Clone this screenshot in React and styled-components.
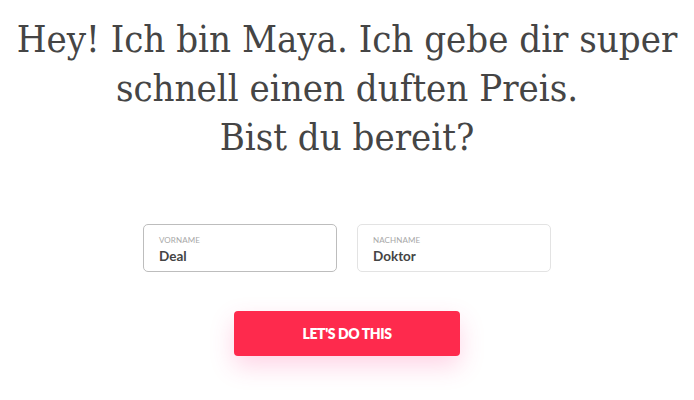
import styled, { createGlobalStyle } from "styled-components";

const GlobalStyle = createGlobalStyle`
  html, body {
    margin: 0;
    padding: 0;
    background: #ffffff;
  }
`;

const Page = styled.main`
  width: 694px;
  height: 400px;
  overflow: hidden;
  display: flex;
  flex-direction: column;
  align-items: center;
  padding-top: 15px;
  box-sizing: border-box;
  font-family: "Lato", "Open Sans", sans-serif;
`;

const Heading = styled.h1`
  margin: 0;
  font-family: "DejaVu Serif Condensed", "DejaVu Serif", serif;
  font-stretch: condensed;
  font-weight: 400;
  font-size: 38px;
  line-height: 49px;
  color: #454545;
  text-align: center;
  white-space: nowrap;
`;

const Fields = styled.div`
  display: flex;
  gap: 20px;
  margin-top: 62px;
`;

const Field = styled.label`
  width: 194px;
  height: 48px;
  box-sizing: border-box;
  border: 1px solid ${(p) => (p.$active ? "#bdbdbd" : "#e3e3e3")};
  border-radius: 5px;
  padding: 10px 15px 0;
  display: flex;
  flex-direction: column;
  background: #fff;
`;

const Label = styled.span`
  font-size: 8px;
  line-height: 10px;
  color: #a8a8a8;
  text-transform: uppercase;
  letter-spacing: 0.1px;
`;

const Value = styled.span`
  margin-top: 3px;
  font-size: 13.5px;
  line-height: 16px;
  font-weight: 700;
  color: #444;
`;

const Button = styled.button`
  margin-top: 39px;
  width: 226px;
  height: 45px;
  border: none;
  border-radius: 4px;
  background: #fe2a4d;
  color: #fff;
  font-family: "Lato", sans-serif;
  font-weight: 800;
  font-size: 14px;
  letter-spacing: -0.4px;
  text-transform: uppercase;
  box-shadow: 0 10px 25px rgba(255, 60, 140, 0.22);
  cursor: pointer;
`;

const App = () => {
  return (
    <>
      <GlobalStyle />
      <Page>
        <Heading>
          Hey! Ich bin Maya. Ich gebe dir super
          <br />
          schnell einen duften Preis.
          <br />
          Bist du bereit?
        </Heading>
        <Fields>
          <Field $active>
            <Label>Vorname</Label>
            <Value>Deal</Value>
          </Field>
          <Field>
            <Label>Nachname</Label>
            <Value>Doktor</Value>
          </Field>
        </Fields>
        <Button>Let's do this</Button>
      </Page>
    </>
  );
};

export default App;
